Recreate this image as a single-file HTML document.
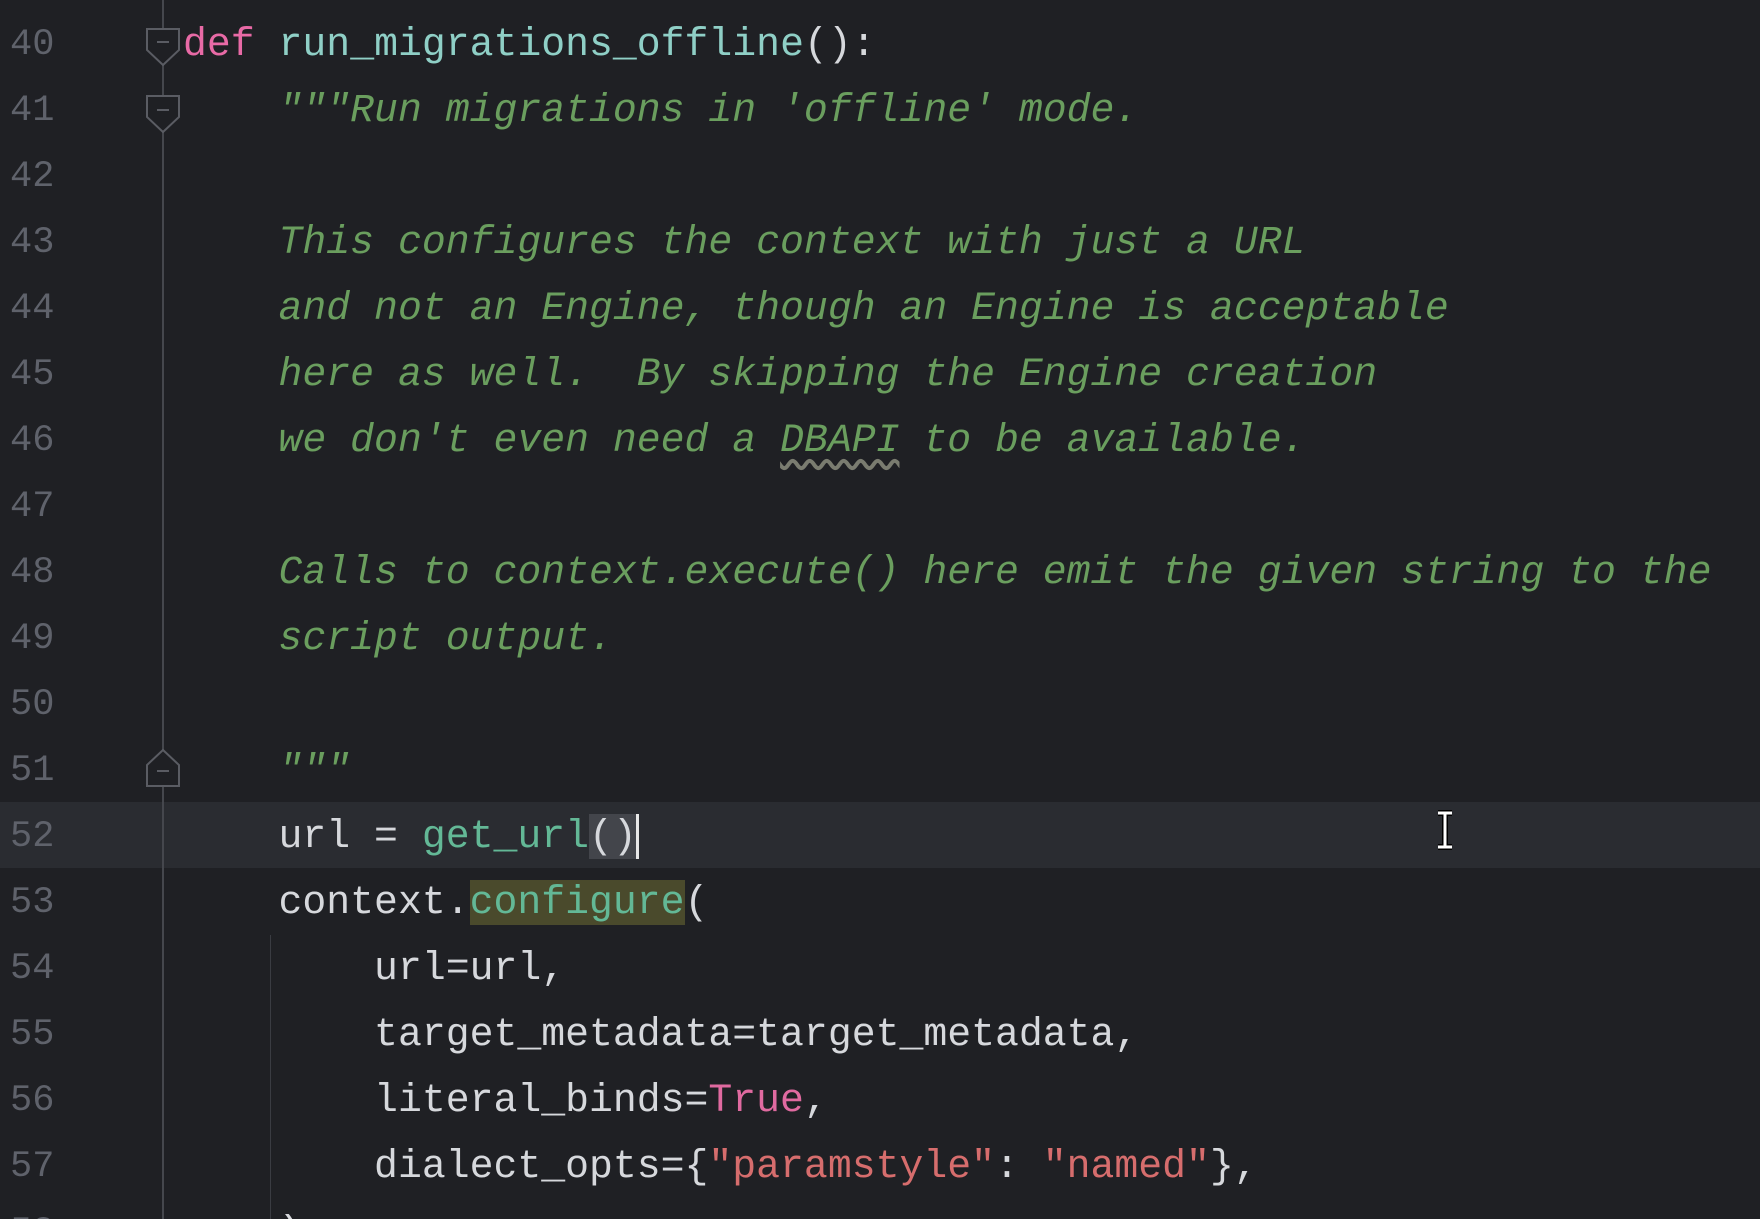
<!DOCTYPE html>
<html style="margin:0;overflow:hidden;width:1760px;height:1219px"><head><meta charset="utf-8"><style>
body{margin:0;width:1760px;height:1219px;overflow:hidden;background:#1f2024;font-family:"Liberation Mono",monospace;}
#w{position:relative;width:1760px;height:1219px;overflow:hidden;background:#1f2024;}
.cur{position:absolute;left:0;top:802px;width:1760px;height:66px;background:#2a2c31;}
.ln{position:absolute;left:10px;width:60px;font-size:37px;color:#5f626b;line-height:66px;}
.ln.a{color:#b8bac0;}
.code{position:absolute;left:183px;font-size:39.8px;line-height:66px;color:#d6d8dc;white-space:pre;}
.k{color:#e86aa6}.f{color:#8fcfc6}.d{color:#6a9e5e;font-style:italic}.g{color:#63b896}
.s{color:#d66d6d}.t{color:#e06aa0}
.gl{position:absolute;left:162px;width:2px;background:#45474d;}
</style></head><body><div id="w">
<div class="cur"></div>
<div class="gl" style="top:0;height:1219px"></div>
<div class="gl" style="left:270px;top:935px;height:284px;width:1px;background:#3a3c42"></div>
<svg style="position:absolute;left:0;top:0" width="200" height="1219">
<g fill="#1f2024" stroke="#5a5c63" stroke-width="2">
<path d="M147 29 H179 V50 L163 65 L147 50 Z"/><line x1="157" y1="42" x2="169" y2="42"/>
<path d="M147 96 H179 V117 L163 132 L147 117 Z"/><line x1="157" y1="110" x2="169" y2="110"/>
<path d="M147 786 H179 V765 L163 750 L147 765 Z"/><line x1="157" y1="771" x2="169" y2="771"/>
</g></svg>
<div class="ln" style="top:12px">40<br>41<br>42<br>43<br>44<br>45<br>46<br>47<br>48<br>49<br>50<br>51<br><span class="a">52</span><br>53<br>54<br>55<br>56<br>57<br>58</div>
<div class="code" style="top:12px"><span class="k">def</span> <span class="f">run_migrations_offline</span>():
<span class="d">    """Run migrations in 'offline' mode.

    This configures the context with just a URL
    and not an Engine, though an Engine is acceptable
    here as well.  By skipping the Engine creation
    we don't even need a <span style="text-decoration:underline wavy #7a7c70;text-underline-offset:8px">DBAPI</span> to be available.

    Calls to context.execute() here emit the given string to the
    script output.

    """</span>
    url = <span class="g">get_url</span><span style="background:#43454b">()</span><span style="border-left:3px solid #e8e8e8;margin-left:-1px"></span>
    context.<span class="g" style="background:#4a4a2c">configure</span>(
        url=url,
        target_metadata=target_metadata,
        literal_binds=<span class="t">True</span>,
        dialect_opts={<span class="s">"paramstyle"</span>: <span class="s">"named"</span>},
    )</div>
<svg style="position:absolute;left:1433px;top:810px" width="24" height="40">
<path d="M5 3 H19 M12 3 V37 M5 37 H19" stroke="#000" stroke-width="6" fill="none"/>
<path d="M5 3 H19 M12 3 V37 M5 37 H19" stroke="#fff" stroke-width="3" fill="none"/>
</svg>
</div></body></html>
